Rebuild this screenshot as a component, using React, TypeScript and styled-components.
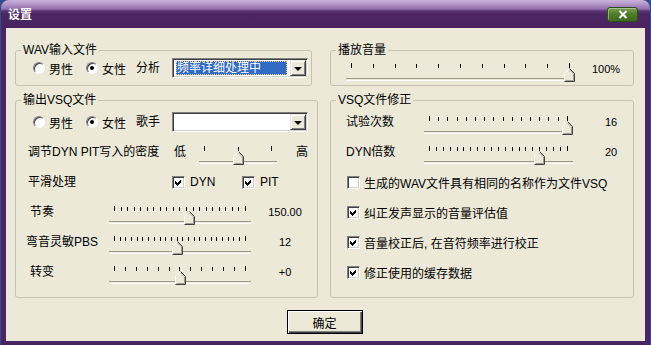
import React from "react";
import styled, { createGlobalStyle } from "styled-components";

const GlobalStyle = createGlobalStyle`
  html, body {
    margin: 0;
    padding: 0;
  }
  body {
    width: 651px;
    height: 345px;
    overflow: hidden;
    background: #2d4f8e;
    font-family: "Liberation Sans", "Noto Sans CJK SC", sans-serif;
    font-size: 12px;
    color: #000;
  }
`;

const Window = styled.div`
  margin-left: 1px;
  width: 649px;
  height: 345px;
  display: flex;
  flex-direction: column;
  background: #4b2561;
  border-radius: 8px 8px 0 0;
  overflow: hidden;
`;

const TitleBar = styled.div`
  flex: none;
  height: 28px;
  display: flex;
  align-items: center;
  justify-content: space-between;
  padding: 0 12px 0 7px;
  background: linear-gradient(
    #cbb3dc 0px,
    #b497c8 4px,
    #9370ae 9px,
    #5a3472 11px,
    #4c2662 14px,
    #4a2460 100%
  );
`;

const Title = styled.span`
  color: #fff;
  font-weight: bold;
  font-size: 12px;
  line-height: 14px;
  padding-top: 2px;
`;

const CloseButton = styled.span`
  width: 31px;
  height: 15px;
  margin-top: 1px;
  box-sizing: border-box;
  border: 1px solid #2f4d1a;
  border-radius: 3px;
  background: linear-gradient(#7aa252, #4f7d2c 45%, #3f6a20);
  box-shadow: inset 1px 1px 0 rgba(255, 255, 255, 0.35);
  display: flex;
  align-items: center;
  justify-content: center;
`;

const Content = styled.div`
  flex: 1;
  margin: 0 5px 4px;
  padding: 15px 11px 0 9px;
  background: #ece9d8;
  display: flex;
  flex-direction: column;
`;

const Groups = styled.div`
  display: grid;
  grid-template-columns: 303px 304px;
  column-gap: 12px;
  row-gap: 7px;
`;

const Group = styled.fieldset<{ $h: number; $w: number }>`
  margin: 0;
  padding: 0;
  min-width: 0;
  box-sizing: border-box;
  width: ${(p) => p.$w}px;
  height: ${(p) => p.$h}px;
  border: 1px solid #c5c2b2;
  border-radius: 3px;
`;

const Legend = styled.legend`
  margin-left: 5px;
  padding: 0 2px;
  line-height: 14px;
`;

const GroupBody = styled.div<{ $left: number; $top?: number }>`
  padding-left: ${(p) => p.$left}px;
  margin-top: ${(p) => p.$top ?? 0}px;
  display: flex;
  flex-direction: column;
`;

const Row = styled.div<{ $h?: number; $indent?: number }>`
  display: flex;
  align-items: center;
  height: ${(p) => p.$h ?? 30}px;
  margin-left: ${(p) => p.$indent ?? 0}px;
`;

const TopRow = styled.div`
  display: flex;
  align-items: flex-start;
  height: 30px;
`;

const Text = styled.span<{ $w?: number; $ml?: number }>`
  flex: none;
  width: ${(p) => (p.$w ? `${p.$w}px` : "auto")};
  margin-left: ${(p) => p.$ml ?? 0}px;
  line-height: 30px;
  white-space: nowrap;
`;

const SliderRowBox = styled.div<{ $cols: string }>`
  display: grid;
  grid-template-columns: ${(p) => p.$cols};
  align-items: start;
  height: 30px;
`;

const RowLabel = styled.span<{ $ml?: number }>`
  margin-left: ${(p) => p.$ml ?? 0}px;
  line-height: 30px;
  white-space: nowrap;
`;

const Value = styled.span`
  grid-column: 4;
  text-align: center;
  font-size: 11px;
  line-height: 30px;
`;

/* ---- radio / check ---- */

const RadioItem = styled.span<{ $ml?: number }>`
  display: inline-flex;
  align-items: center;
  gap: 4px;
  margin-left: ${(p) => p.$ml ?? 0}px;
  flex: none;
`;

const RadioCircle = styled.span<{ $on?: boolean }>`
  width: 12px;
  height: 12px;
  box-sizing: border-box;
  border-radius: 50%;
  border: 1px solid;
  border-color: #808080 #fff #fff #808080;
  box-shadow: inset 1px 1px 0 #404040;
  background: #fff;
  display: inline-flex;
  align-items: center;
  justify-content: center;

  &::after {
    content: "";
    width: 4px;
    height: 4px;
    border-radius: 50%;
    background: ${(p) => (p.$on ? "#000" : "transparent")};
  }
`;

const CheckItem = styled.span<{ $w?: number; $ml?: number }>`
  display: inline-flex;
  align-items: center;
  gap: ${(p) => (p.$w ? 5 : 4)}px;
  width: ${(p) => (p.$w ? `${p.$w}px` : "auto")};
  margin-left: ${(p) => p.$ml ?? 0}px;
  flex: none;
  white-space: nowrap;
`;

const CheckBox = styled.span`
  width: 13px;
  height: 13px;
  box-sizing: border-box;
  border: 1px solid;
  border-color: #808080 #fff #fff #808080;
  box-shadow: inset 1px 1px 0 #404040, inset -1px -1px 0 #d4d0c8;
  background: #fff;
  display: inline-flex;
`;

/* ---- combo ---- */

const Combo = styled.div<{ $ml?: number }>`
  flex: none;
  width: 136px;
  height: 20px;
  margin-left: ${(p) => p.$ml ?? 0}px;
  box-sizing: border-box;
  padding: 1px;
  border: 1px solid;
  border-color: #808080 #fff #fff #808080;
  box-shadow: inset 1px 1px 0 #404040, inset -1px -1px 0 #d4d0c8;
  background: #fff;
  display: flex;
  gap: 1px;
`;

const ComboField = styled.span<{ $selected?: boolean }>`
  flex: 1;
  margin: 1px 2px 1px 2px;
  padding-left: 1px;
  line-height: 14px;
  color: ${(p) => (p.$selected ? "#fff" : "#000")};
  background: ${(p) => (p.$selected ? "#316ac5" : "transparent")};
  outline: ${(p) => (p.$selected ? "1px dotted #f2d27a" : "none")};
  outline-offset: -1px;
  white-space: nowrap;
  overflow: hidden;
`;

const DropButton = styled.span`
  flex: none;
  width: 16px;
  height: 16px;
  box-sizing: border-box;
  border: 1px solid;
  border-color: #ece9d8 #404040 #404040 #ece9d8;
  box-shadow: inset 1px 1px 0 #fff, inset -1px -1px 0 #808080;
  background: #ece9d8;
  display: flex;
  align-items: center;
  justify-content: center;

  &::after {
    content: "";
    margin-top: 1px;
    border-left: 4px solid transparent;
    border-right: 4px solid transparent;
    border-top: 4px solid #000;
  }
`;

/* ---- slider ---- */

const SliderBox = styled.div<{ $w: number }>`
  position: relative;
  width: ${(p) => p.$w}px;
  height: 21px;
  margin-top: 7px;
  flex: none;
`;

const TickRow = styled.div`
  display: flex;
  justify-content: space-between;
  align-items: flex-end;
  margin: 2px 5px 0;
  height: 5px;
`;

const Tick = styled.span<{ $end?: boolean }>`
  width: 1px;
  height: ${(p) => (p.$end ? 5 : 4)}px;
  background: #000;
`;

const Track = styled.div`
  margin-top: 10px;
  height: 1px;
  border-top: 1px solid #9d9a8c;
  border-bottom: 1px solid #fff;
`;

const ThumbSvg = styled.svg`
  position: absolute;
  top: 7px;
`;

function Slider({ width, ticks, pos }: { width: number; ticks: number; pos: number }) {
  return (
    <SliderBox $w={width}>
      <TickRow>
        {Array.from({ length: ticks }, (_, i) => (
          <Tick key={i} $end={i === 0 || i === ticks - 1} />
        ))}
      </TickRow>
      <Track />
      <ThumbSvg
        width="11"
        height="14"
        viewBox="0 0 11 14"
        style={{ left: Math.round(pos * (width - 11)) }}
      >
        <path d="M0.5 13.5V5.5L5.5 0.5L10.5 5.5V13.5Z" fill="#ece9d8" />
        <path d="M0.5 13V5.5L5.5 0.5" stroke="#fff" fill="none" />
        <path d="M5.5 0.5L10.5 5.5V13.5H0.5" stroke="#404040" fill="none" />
        <path d="M5.5 1.9L9.5 5.9V12.5H1.5" stroke="#a09d90" fill="none" />
      </ThumbSvg>
    </SliderBox>
  );
}

function SliderRow(props: {
  label?: string;
  labelShift?: number;
  cols: string;
  width: number;
  ticks: number;
  pos: number;
  value: string;
}) {
  return (
    <SliderRowBox $cols={props.cols}>
      <RowLabel $ml={props.labelShift}>{props.label}</RowLabel>
      <Slider width={props.width} ticks={props.ticks} pos={props.pos} />
      <Value>{props.value}</Value>
    </SliderRowBox>
  );
}

function Radio({ label, on, ml }: { label: string; on?: boolean; ml?: number }) {
  return (
    <RadioItem $ml={ml}>
      <RadioCircle $on={on} />
      {label}
    </RadioItem>
  );
}

function Check({ label, on, w, ml }: { label: string; on?: boolean; w?: number; ml?: number }) {
  return (
    <CheckItem $w={w} $ml={ml}>
      <CheckBox>
        {on && (
          <svg width="11" height="11" viewBox="0 0 11 11" shapeRendering="crispEdges">
            <polygon points="2,4 4,6 8,2 8,5 4,9 2,7" fill="#000" />
          </svg>
        )}
      </CheckBox>
      {label}
    </CheckItem>
  );
}

const OkButton = styled.button`
  align-self: center;
  width: 76px;
  height: 24px;
  margin-top: 12px;
  padding: 0;
  border: 1px solid #000;
  background: #ece9d8;
  box-shadow: inset 1px 1px 0 #fff, inset -1px -1px 0 #404040, inset -2px -2px 0 #808080;
  font: inherit;
  color: #000;
`;

const LEFT_COLS = "81px 142px 9px 50px";
const RIGHT_COLS = "78px 149px 18px 40px";

export default function App() {
  return (
    <>
      <GlobalStyle />
      <Window>
        <TitleBar>
          <Title>设置</Title>
          <CloseButton>
            <svg width="10" height="9" viewBox="0 0 10 9">
              <path d="M1.5 1L8.5 8M8.5 1L1.5 8" stroke="#fff" strokeWidth="2" />
            </svg>
          </CloseButton>
        </TitleBar>
        <Content>
          <Groups>
            <Group $w={297} $h={43}>
              <Legend>WAV输入文件</Legend>
              <GroupBody $left={16} $top={1}>
                <Row $h={20}>
                  <Radio label="男性" ml={1} />
                  <Radio label="女性" on ml={13} />
                  <Text $ml={10}>分析</Text>
                  <Combo $ml={12}>
                    <ComboField $selected>频率详细处理中</ComboField>
                    <DropButton />
                  </Combo>
                </Row>
              </GroupBody>
            </Group>

            <Group $w={304} $h={43}>
              <Legend>播放音量</Legend>
              <GroupBody $left={15} $top={-3}>
                <SliderRow cols="0px 229px 11px 40px" width={229} ticks={11} pos={1} value="100%" />
              </GroupBody>
            </Group>

            <Group $w={303} $h={205}>
              <Legend>输出VSQ文件</Legend>
              <GroupBody $left={12}>
                <Row>
                  <Radio label="男性" ml={5} />
                  <Radio label="女性" on ml={13} />
                  <Text $ml={10}>歌手</Text>
                  <Combo $ml={12}>
                    <ComboField />
                    <DropButton />
                  </Combo>
                </Row>
                <TopRow>
                  <Text $w={146}>调节DYN PIT写入的密度</Text>
                  <Text $w={25}>低</Text>
                  <Slider width={78} ticks={3} pos={0.5} />
                  <Text $ml={19}>高</Text>
                </TopRow>
                <Row>
                  <Text $w={144}>平滑处理</Text>
                  <Check label="DYN" on w={70} />
                  <Check label="PIT" on w={60} />
                </Row>
                <SliderRow label="节奏" labelShift={2} cols={LEFT_COLS} width={142} ticks={21} pos={0.57} value="150.00" />
                <SliderRow label="弯音灵敏PBS" labelShift={-2} cols={LEFT_COLS} width={142} ticks={24} pos={0.478} value="12" />
                <SliderRow label="转变" labelShift={2} cols={LEFT_COLS} width={142} ticks={13} pos={0.5} value="+0" />
              </GroupBody>
            </Group>

            <Group $w={304} $h={205}>
              <Legend>VSQ文件修正</Legend>
              <GroupBody $left={15}>
                <SliderRow label="试验次数" cols={RIGHT_COLS} width={149} ticks={16} pos={1} value="16" />
                <SliderRow label="DYN倍数" cols={RIGHT_COLS} width={149} ticks={21} pos={0.8} value="20" />
                <Row>
                  <Check label="生成的WAV文件具有相同的名称作为文件VSQ" ml={1} />
                </Row>
                <Row>
                  <Check label="纠正发声显示的音量评估值" on ml={1} />
                </Row>
                <Row>
                  <Check label="音量校正后, 在音符频率进行校正" on ml={1} />
                </Row>
                <Row>
                  <Check label="修正使用的缓存数据" on ml={1} />
                </Row>
              </GroupBody>
            </Group>
          </Groups>
          <OkButton>确定</OkButton>
        </Content>
      </Window>
    </>
  );
}
